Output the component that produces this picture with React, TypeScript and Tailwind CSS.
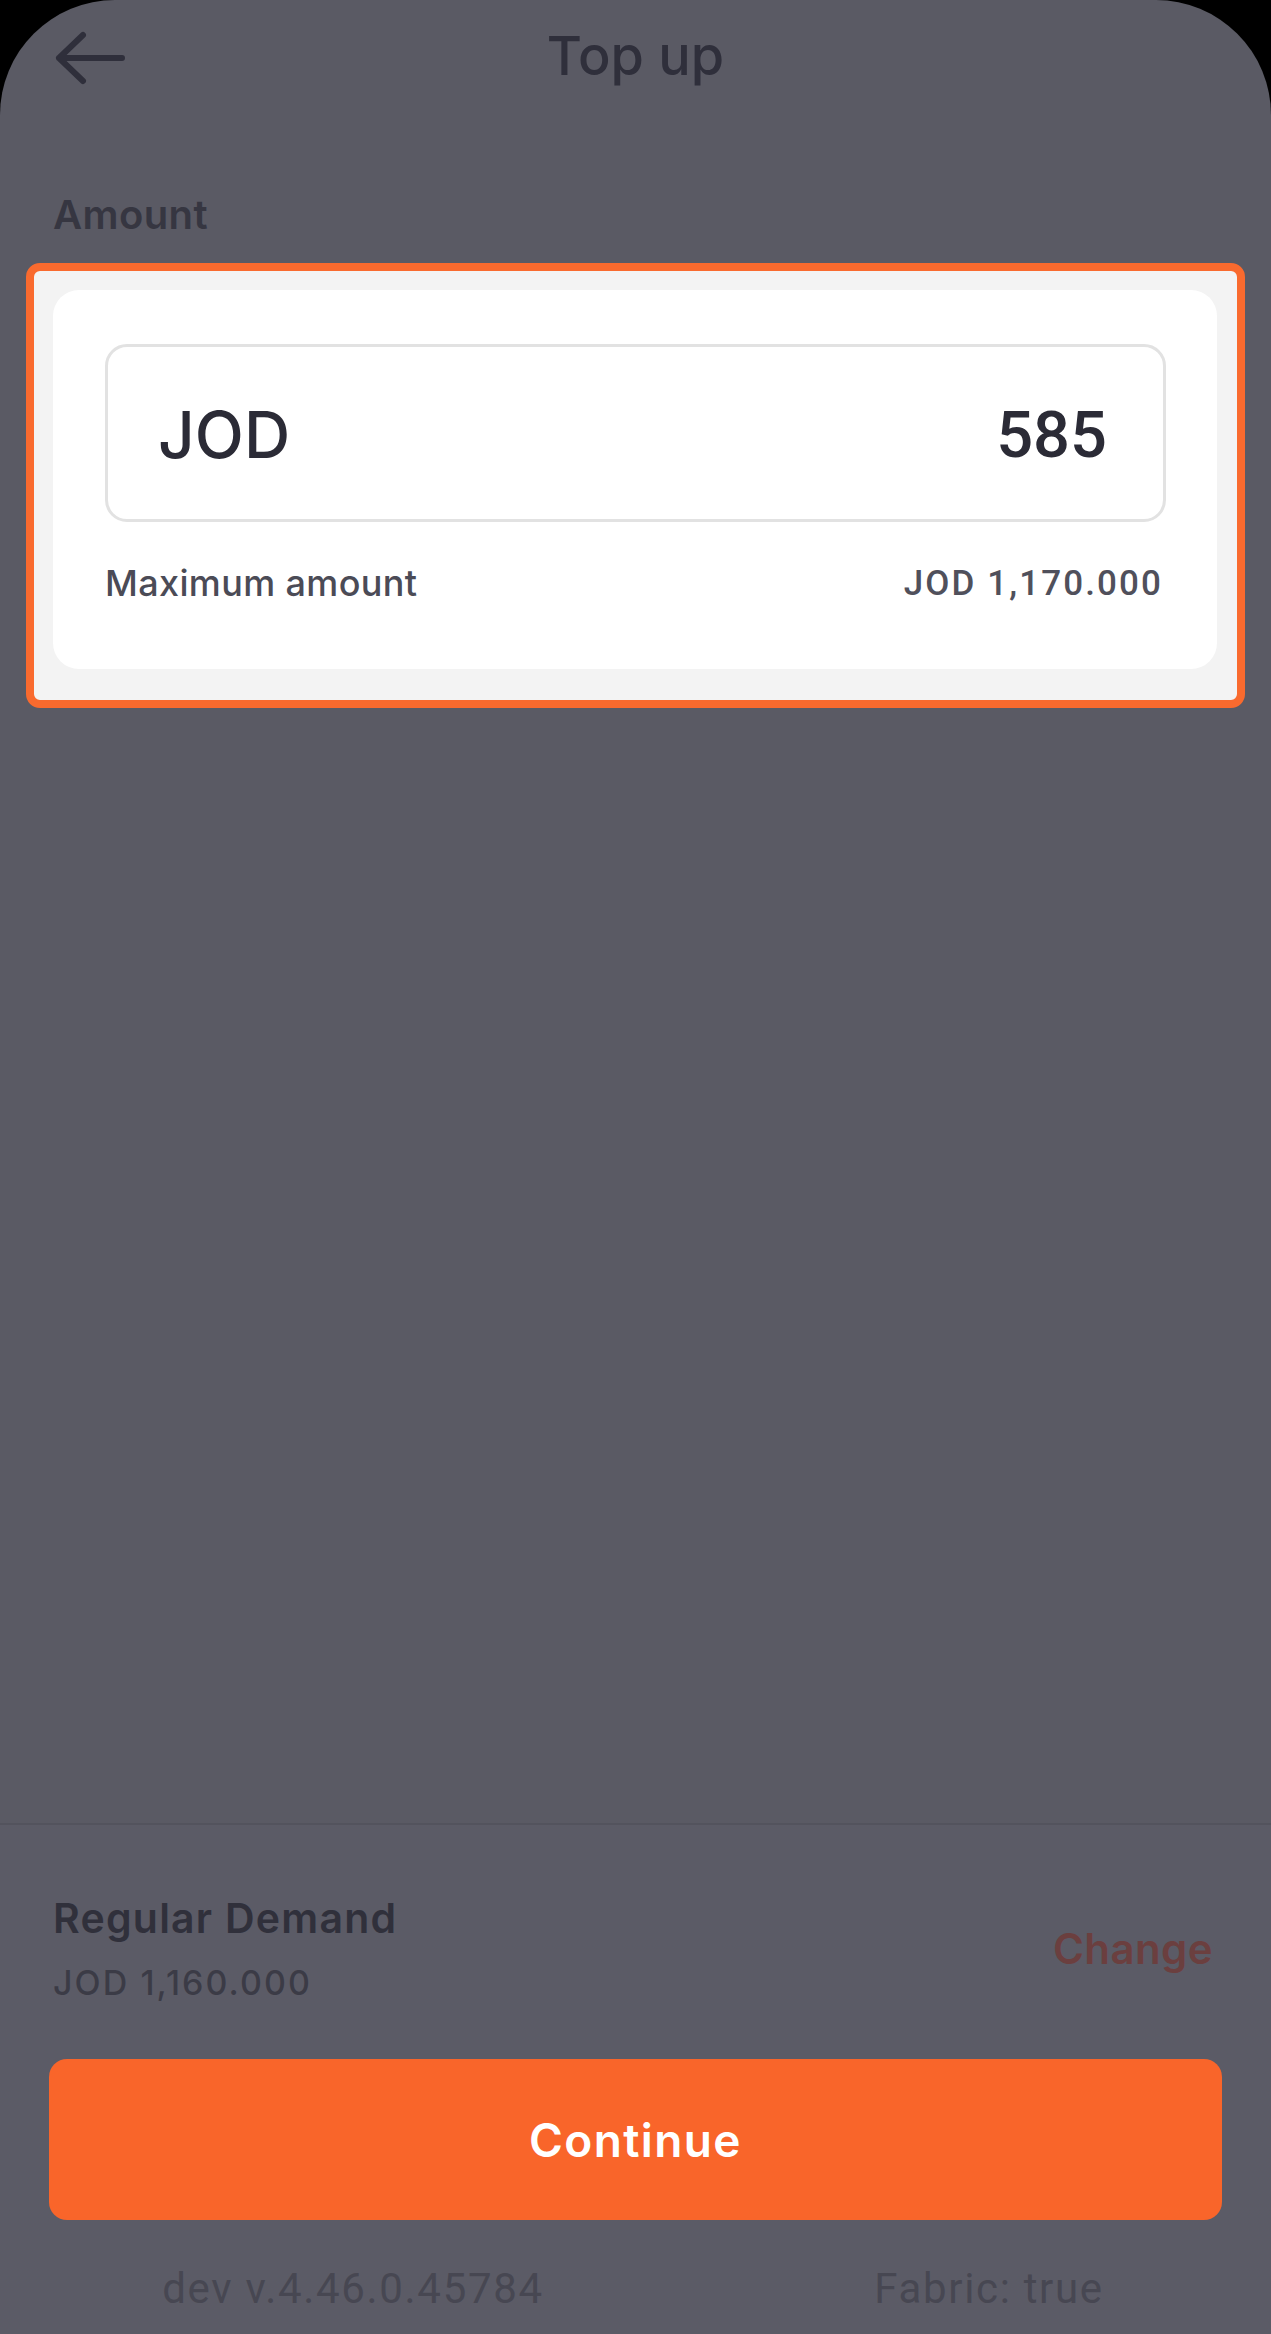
export default function App() {
  return (
    <div className="h-[2334px] w-[1271px] bg-black font-[Inter,sans-serif]">
      <div className="flex h-full flex-col rounded-t-[115px] bg-[#5a5a64]">
        {/* header */}
        <header className="flex items-start justify-between pl-[52px] pr-[52px] pt-[28px]">
          <svg width="76" height="60" viewBox="0 0 76 60" fill="none" className="text-[#2f2f3b]">
            <path
              d="M70 30H7M31 7L7 30l24 23"
              stroke="currentColor"
              strokeWidth="6"
              strokeLinecap="round"
              strokeLinejoin="round"
            />
          </svg>
          <h1 className="mt-[1px] text-[54px] font-medium leading-none text-[#2f2f3b]">Top up</h1>
          <div className="w-[76px]" />
        </header>

        <p className="ml-[53px] mt-[107px] text-[40px] font-semibold leading-none tracking-[0.01em] text-[#363641]">
          Amount
        </p>

        {/* highlighted amount block */}
        <section className="mx-[26px] mt-[28px] rounded-[14px] border-[8px] border-[#f96a2e] bg-[#f3f3f3] pb-[31px] pl-[19px] pr-[20px] pt-[19px]">
          <div className="rounded-[26px] bg-white pb-[68px] pl-[52px] pr-[51px] pt-[54px]">
            <div className="flex h-[178px] items-center justify-between rounded-[22px] border-[3px] border-[#e2e2e2] pl-[50px] pr-[56px] pt-[4px]">
              <span className="text-[64px] font-medium leading-none text-[#2b2b36]">JOD</span>
              <span className="font-[Roboto,sans-serif] text-[65px] font-medium leading-none text-[#2b2b36]">
                585
              </span>
            </div>
            <div className="mt-[43px] flex items-center justify-between pr-[3px]">
              <span className="text-[36px] font-medium leading-none tracking-[0.01em] text-[#4b4b56]">
                Maximum amount
              </span>
              <span className="font-[Roboto,sans-serif] text-[35px] font-medium leading-none tracking-[0.06em] text-[#50505b]">
                JOD 1,170.000
              </span>
            </div>
          </div>
        </section>

        <div className="flex-1" />

        {/* bottom sheet */}
        <footer className="border-t-2 border-[#53535d] bg-[#5b5b66] pb-[24px] pt-[73px]">
          <div className="flex items-center justify-between pl-[53px] pr-[58px]">
            <div>
              <p className="text-[41px] font-semibold leading-none tracking-[0.03em] text-[#30303b]">
                Regular Demand
              </p>
              <p className="mt-[27px] text-[34px] font-medium leading-none tracking-[0.06em] text-[#3b3b46]">
                JOD 1,160.000
              </p>
            </div>
            <span className="text-[42px] font-semibold leading-none tracking-[0.01em] text-[#6b3f3f]">
              Change
            </span>
          </div>

          <button className="mx-[49px] mt-[59px] flex h-[161px] w-[1173px] items-center justify-center rounded-[18px] bg-[#f9652a]">
            <span className="text-[46px] font-semibold leading-none tracking-[0.03em] text-white">
              Continue
            </span>
          </button>

          <div className="mt-[48px] flex pl-[103px] font-[Roboto,sans-serif] text-[42px] leading-none tracking-[0.04em] text-[#474752]">
            <span className="w-[500px] text-center">dev v.4.46.0.45784</span>
            <span className="ml-[136px] w-[500px] text-center">Fabric: true</span>
          </div>
        </footer>
      </div>
    </div>
  );
}
